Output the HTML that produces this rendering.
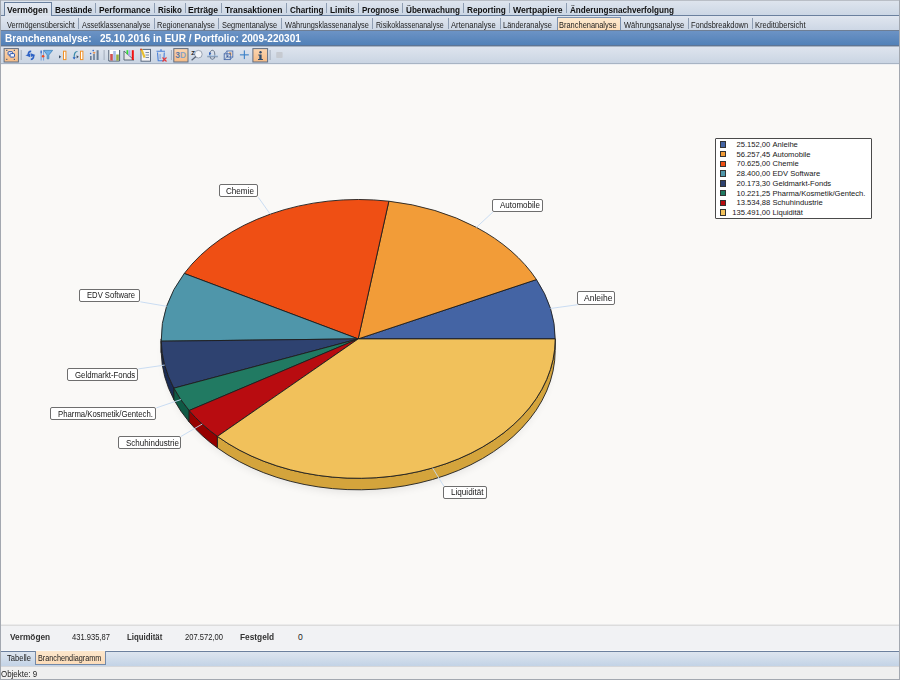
<!DOCTYPE html>
<html><head><meta charset="utf-8"><style>
html,body{margin:0;padding:0;}
body{width:900px;height:680px;position:relative;overflow:hidden;background:#faf9f7;font-family:"Liberation Sans", sans-serif;}
.t{position:absolute;white-space:nowrap;line-height:1;font-family:"Liberation Sans", sans-serif;}
</style></head><body>
<div style="position:absolute;left:0px;top:0px;width:900px;height:15px;background:linear-gradient(#dfe5ee,#ccd7e5);"></div><div style="position:absolute;left:0px;top:15px;width:900px;height:1px;background:#6a809e;"></div><div style="position:absolute;left:4px;top:2px;width:46px;height:13px;border:1px solid #6a809e;border-bottom:none;background:linear-gradient(#e4e9f1,#d9e0ea);"></div><div style="position:absolute;left:5px;top:15px;width:46px;height:1px;background:#d9e0ea;"></div><div class="t" style="transform:scaleX(0.9613);transform-origin:0 0;left:7.0px;top:6px;font-size:8.8px;font-weight:700;color:#111;">Vermögen</div><div class="t" style="transform:scaleX(0.9379);transform-origin:0 0;left:55.0px;top:6px;font-size:8.8px;font-weight:700;color:#111;">Bestände</div><div class="t" style="transform:scaleX(0.9554);transform-origin:0 0;left:99.0px;top:6px;font-size:8.8px;font-weight:700;color:#111;">Performance</div><div class="t" style="transform:scaleX(0.9051);transform-origin:0 0;left:157.5px;top:6px;font-size:8.8px;font-weight:700;color:#111;">Risiko</div><div class="t" style="transform:scaleX(0.9785);transform-origin:0 0;left:188.25px;top:6px;font-size:8.8px;font-weight:700;color:#111;">Erträge</div><div class="t" style="transform:scaleX(0.9622);transform-origin:0 0;left:225.0px;top:6px;font-size:8.8px;font-weight:700;color:#111;">Transaktionen</div><div class="t" style="transform:scaleX(0.9234);transform-origin:0 0;left:289.5px;top:6px;font-size:8.8px;font-weight:700;color:#111;">Charting</div><div class="t" style="transform:scaleX(0.9515);transform-origin:0 0;left:330.0px;top:6px;font-size:8.8px;font-weight:700;color:#111;">Limits</div><div class="t" style="transform:scaleX(0.9094);transform-origin:0 0;left:361.5px;top:6px;font-size:8.8px;font-weight:700;color:#111;">Prognose</div><div class="t" style="transform:scaleX(0.9266);transform-origin:0 0;left:405.75px;top:6px;font-size:8.8px;font-weight:700;color:#111;">Überwachung</div><div class="t" style="transform:scaleX(0.9363);transform-origin:0 0;left:466.5px;top:6px;font-size:8.8px;font-weight:700;color:#111;">Reporting</div><div class="t" style="transform:scaleX(0.9795);transform-origin:0 0;left:512.75px;top:6px;font-size:8.8px;font-weight:700;color:#111;">Wertpapiere</div><div class="t" style="transform:scaleX(0.9242);transform-origin:0 0;left:569.5px;top:6px;font-size:8.8px;font-weight:700;color:#111;">Änderungsnachverfolgung</div><div style="position:absolute;left:95.25px;top:3px;width:1px;height:10px;background:#8e9db2;"></div><div style="position:absolute;left:153.5px;top:3px;width:1px;height:10px;background:#8e9db2;"></div><div style="position:absolute;left:184.5px;top:3px;width:1px;height:10px;background:#8e9db2;"></div><div style="position:absolute;left:221.0px;top:3px;width:1px;height:10px;background:#8e9db2;"></div><div style="position:absolute;left:285.75px;top:3px;width:1px;height:10px;background:#8e9db2;"></div><div style="position:absolute;left:326.25px;top:3px;width:1px;height:10px;background:#8e9db2;"></div><div style="position:absolute;left:357.75px;top:3px;width:1px;height:10px;background:#8e9db2;"></div><div style="position:absolute;left:402.0px;top:3px;width:1px;height:10px;background:#8e9db2;"></div><div style="position:absolute;left:462.75px;top:3px;width:1px;height:10px;background:#8e9db2;"></div><div style="position:absolute;left:509.0px;top:3px;width:1px;height:10px;background:#8e9db2;"></div><div style="position:absolute;left:565.75px;top:3px;width:1px;height:10px;background:#8e9db2;"></div><div style="position:absolute;left:0px;top:16px;width:900px;height:14px;background:linear-gradient(#e0e6ef,#cdd7e5);"></div><div style="position:absolute;left:557px;top:17px;width:62px;height:13px;border:1px solid #7d92b0;border-bottom:none;background:linear-gradient(#fde9cf,#fcdcb8);"></div><div class="t" style="transform:scaleX(0.8667);transform-origin:0 0;left:7.0px;top:21px;font-size:8.6px;font-weight:400;color:#222;">Vermögensübersicht</div><div class="t" style="transform:scaleX(0.8522);transform-origin:0 0;left:82.0px;top:21px;font-size:8.6px;font-weight:400;color:#222;">Assetklassenanalyse</div><div class="t" style="transform:scaleX(0.8717);transform-origin:0 0;left:157.0px;top:21px;font-size:8.6px;font-weight:400;color:#222;">Regionenanalyse</div><div class="t" style="transform:scaleX(0.8613);transform-origin:0 0;left:222.0px;top:21px;font-size:8.6px;font-weight:400;color:#222;">Segmentanalyse</div><div class="t" style="transform:scaleX(0.8567);transform-origin:0 0;left:284.5px;top:21px;font-size:8.6px;font-weight:400;color:#222;">Währungsklassenanalyse</div><div class="t" style="transform:scaleX(0.8233);transform-origin:0 0;left:375.75px;top:21px;font-size:8.6px;font-weight:400;color:#222;">Risikoklassenanalyse</div><div class="t" style="transform:scaleX(0.8899);transform-origin:0 0;left:451.25px;top:21px;font-size:8.6px;font-weight:400;color:#222;">Artenanalyse</div><div class="t" style="transform:scaleX(0.8672);transform-origin:0 0;left:503.25px;top:21px;font-size:8.6px;font-weight:400;color:#222;">Länderanalyse</div><div class="t" style="transform:scaleX(0.8679);transform-origin:0 0;left:559.0px;top:21px;font-size:8.6px;font-weight:400;color:#222;">Branchenanalyse</div><div class="t" style="transform:scaleX(0.8743);transform-origin:0 0;left:624.0px;top:21px;font-size:8.6px;font-weight:400;color:#222;">Währungsanalyse</div><div class="t" style="transform:scaleX(0.8667);transform-origin:0 0;left:691.25px;top:21px;font-size:8.6px;font-weight:400;color:#222;">Fondsbreakdown</div><div class="t" style="transform:scaleX(0.8835);transform-origin:0 0;left:755.25px;top:21px;font-size:8.6px;font-weight:400;color:#222;">Kreditübersicht</div><div style="position:absolute;left:78.25px;top:18px;width:1px;height:10.5px;background:#8e9db2;"></div><div style="position:absolute;left:153.5px;top:18px;width:1px;height:10.5px;background:#8e9db2;"></div><div style="position:absolute;left:218.25px;top:18px;width:1px;height:10.5px;background:#8e9db2;"></div><div style="position:absolute;left:280.75px;top:18px;width:1px;height:10.5px;background:#8e9db2;"></div><div style="position:absolute;left:372.0px;top:18px;width:1px;height:10.5px;background:#8e9db2;"></div><div style="position:absolute;left:447.5px;top:18px;width:1px;height:10.5px;background:#8e9db2;"></div><div style="position:absolute;left:499.5px;top:18px;width:1px;height:10.5px;background:#8e9db2;"></div><div style="position:absolute;left:687.5px;top:18px;width:1px;height:10.5px;background:#8e9db2;"></div><div style="position:absolute;left:752.0px;top:18px;width:1px;height:10.5px;background:#8e9db2;"></div><div style="position:absolute;left:0px;top:30px;width:900px;height:1px;background:#6e7e94;"></div><div style="position:absolute;left:0px;top:31px;width:900px;height:14px;background:linear-gradient(#6c93c5,#5281b8);"></div><div style="position:absolute;left:0px;top:45px;width:900px;height:1px;background:#5e7595;"></div><div style="position:absolute;left:0px;top:46px;width:900px;height:1px;background:#a8b3c2;"></div><div class="t" style="transform:scaleX(1.0044);transform-origin:0 0;left:5.2px;top:34px;font-size:10px;font-weight:700;color:#fff;">Branchenanalyse:&nbsp;&nbsp; 25.10.2016 in EUR / Portfolio: 2009-220301</div><div style="position:absolute;left:0px;top:47px;width:900px;height:16px;background:linear-gradient(#dee4ee,#cad5e3);"></div><div style="position:absolute;left:0px;top:63px;width:900px;height:1px;background:#a8b4c4;"></div><div style="position:absolute;left:0px;top:64px;width:900px;height:1px;background:#eef0f3;"></div><svg width="900" height="66" style="position:absolute;left:0;top:0"><defs><linearGradient id="og" x1="0" y1="0" x2="0" y2="1"><stop offset="0" stop-color="#fbd5b0"/><stop offset="1" stop-color="#f4bb86"/></linearGradient></defs><rect x="4.1" y="48.6" width="14.299999999999999" height="13.4" fill="url(#og)" stroke="#5f6d82" stroke-width="1"/><rect x="173.8" y="48.6" width="14.199999999999989" height="13.4" fill="url(#og)" stroke="#5f6d82" stroke-width="1"/><rect x="252.9" y="48.6" width="14.700000000000017" height="13.4" fill="url(#og)" stroke="#5f6d82" stroke-width="1"/><rect x="20.7" y="50" width="1" height="10" fill="#a3adbb"/><rect x="103.6" y="50" width="1" height="10" fill="#a3adbb"/><rect x="170.9" y="50" width="1" height="10" fill="#a3adbb"/><rect x="269.6" y="50" width="1" height="10" fill="#a3adbb"/><rect x="6.2" y="49.8" width="1.2" height="1.2" fill="#4a5a78"/><rect x="13.8" y="49.8" width="1.2" height="1.2" fill="#4a5a78"/><rect x="6.2" y="58.8" width="1.2" height="1.2" fill="#4a5a78"/><rect x="13.8" y="58.8" width="1.2" height="1.2" fill="#4a5a78"/><rect x="8.1" y="51.7" width="4.4" height="3.3" rx="0.6" fill="#eef2fc" stroke="#2a56b0" stroke-width="1"/><rect x="10.1" y="53.6" width="4.4" height="3.5" rx="0.6" fill="#f4f7fd" stroke="#2a56b0" stroke-width="1"/><path d="M31.2,51.3 C29,51.2 28.2,52.6 28.4,55" stroke="#2e62c4" stroke-width="1.7" fill="none"/><path d="M25.4,55.2 L30.4,53.4 L30.2,57.2 Z" fill="#2e62c4"/><path d="M30.8,59.3 C33,59.2 33.8,57.6 33.6,55" stroke="#2e62c4" stroke-width="1.7" fill="none"/><path d="M35.4,55 L30.8,53.2 L31,56.9 Z" fill="#2e62c4"/><rect x="40.6" y="50.2" width="1.1" height="10.3" fill="#7aa4dc"/><rect x="43" y="50.2" width="1.1" height="10.3" fill="#7aa4dc"/><rect x="40.6" y="50.8" width="1.1" height="2.5" fill="#2e62c4"/><circle cx="43.1" cy="56.2" r="1.3" fill="#f04a20"/><path d="M43.8,50.4 L52.6,50.4 L48.8,55 L48.8,58.8 L47.2,58.8 L47.2,55 Z" fill="#6fb0e8" stroke="#3f82b8" stroke-width="0.8"/><path d="M59,55.2 L61.2,56.8 L59,58.4 Z" fill="#3a4a60"/><rect x="63.5" y="51.2" width="2.4" height="8.4" fill="#fff" stroke="#f0922a" stroke-width="1"/><path d="M77.5,51.5 C75,51.5 74,53.5 74.2,58.5" stroke="#3a8aa8" stroke-width="1.2" fill="none"/><path d="M72.6,57.2 L75.8,57.2 L74.2,59.4 Z" fill="#2e62c4"/><path d="M76.6,55.2 L78.8,56.8 L76.6,58.4 Z" fill="#3a4a60"/><rect x="80.5" y="51.2" width="2.4" height="8.4" fill="#fff" stroke="#f0922a" stroke-width="1"/><rect x="90" y="56" width="1.6" height="4" fill="#6a7d95"/><rect x="93.2" y="54" width="1.6" height="6" fill="#6a7d95"/><rect x="96.6" y="50.2" width="2" height="9.8" fill="#6a7d95"/><path d="M92.6,52.2 L95.6,52.2 L94.1,54 Z" fill="#f07a20"/><circle cx="90.6" cy="53.5" r="0.8" fill="#2e62c4"/><circle cx="93.2" cy="50.6" r="0.8" fill="#2e62c4"/><rect x="108.6" y="50" width="11" height="11" fill="#fff"/><path d="M108.8,50 L108.8,61 L119.6,61 L119.6,50" stroke="#4a5a70" stroke-width="1" fill="none"/><rect x="110.2" y="54" width="2.6" height="6.5" fill="#d05050"/><rect x="113.2" y="51" width="2.6" height="9.5" fill="#a8bce8"/><rect x="116.2" y="54.5" width="2.6" height="6" fill="#98b040"/><path d="M124,51 L134,60 L124,60 Z" fill="#e8e8e8" stroke="#5a6878" stroke-width="1"/><rect x="126.5" y="50.2" width="1.8" height="4" fill="#30e030"/><rect x="128.6" y="50.2" width="1.8" height="6" fill="#b0a8f0"/><rect x="131.8" y="50.2" width="2" height="9.8" fill="#f01010"/><rect x="141" y="49.4" width="9.5" height="11.8" fill="#f4f4f6" stroke="#5a6a80" stroke-width="1"/><rect x="145.5" y="52" width="3.5" height="1" fill="#7a8aa0"/><rect x="145.5" y="54.5" width="3.5" height="1" fill="#7a8aa0"/><rect x="145.5" y="57" width="3.5" height="1" fill="#7a8aa0"/><path d="M140.4,49.6 L142.4,49 L145.6,57 L143.6,58 Z" fill="#e8c030"/><circle cx="141" cy="49.4" r="0.9" fill="#e04020"/><path d="M156.5,51.2 L165,51.2 M160,50 L162,50" stroke="#4a80d8" stroke-width="1.1" fill="none"/><path d="M157.5,52.5 L158.2,60.8 L163.8,60.8 L164.3,52.5" stroke="#4a80d8" stroke-width="1.1" fill="none"/><rect x="159.6" y="54" width="1" height="5" fill="#7aa0e0"/><path d="M162.5,57.5 L166.5,61.5 M166.5,57.5 L162.5,61.5" stroke="#e83838" stroke-width="1.1"/><text x="175.2" y="58.3" font-family="Liberation Sans" font-size="8.8" font-weight="700" fill="#5a7aa6" textLength="10.9" lengthAdjust="spacingAndGlyphs">3<tspan fill="#8aa2c4">D</tspan></text><circle cx="198.4" cy="54.2" r="3.8" fill="#f2f4f8" stroke="#9aa4b4" stroke-width="1"/><path d="M196,56.5 L191.6,60.2" stroke="#5a6476" stroke-width="1.3"/><text x="191.2" y="55" font-family="Liberation Sans" font-size="6" font-weight="700" fill="#222">Z</text><ellipse cx="212.4" cy="54.8" rx="2.4" ry="4.5" fill="none" stroke="#5a6a80" stroke-width="0.9"/><rect x="207.2" y="55.4" width="10.7" height="1.3" fill="#a8c8ec"/><rect x="207.2" y="56.5" width="10.7" height="0.7" fill="#6a7a90"/><path d="M209,52 L211.3,53.6 L209,55.2 Z" fill="#2e62c4"/><rect x="227" y="51" width="5.8" height="6" fill="#eef2fa" stroke="#4a6aa8" stroke-width="0.9"/><path d="M228.6,52.4 L231.4,52.4 L231.4,56 Z" fill="#f08010"/><rect x="224.2" y="53.8" width="6.1" height="5.8" fill="none" stroke="#4a6aa8" stroke-width="0.9"/><path d="M224.2,53.8 L227,51 M230.3,59.6 L232.8,57 M224.6,59.2 L231,52.6" stroke="#5a7ab0" stroke-width="0.7"/><circle cx="227.6" cy="56.2" r="0.6" fill="#2a4a90"/><rect x="239.9" y="54.3" width="8.9" height="1.1" fill="#3a80c8"/><rect x="243.8" y="50.4" width="1.1" height="8.7" fill="#3a80c8"/><circle cx="260.5" cy="52.3" r="1.2" fill="#2f4a6a"/><path d="M258.3,54.4 L261.6,54.4 L261.6,58.9 L262.9,58.9 L262.9,59.9 L258,59.9 L258,58.9 L259.3,58.9 L259.3,55.4 L258.3,55.4 Z" fill="#2f4a6a"/><rect x="276.2" y="52" width="6.4" height="6" rx="0.8" fill="#c6cad1"/></svg><div style="position:absolute;left:0px;top:624px;width:900px;height:1px;background:#ebebeb;"></div><div style="position:absolute;left:0px;top:625px;width:900px;height:1px;background:#dcdcdc;"></div><div style="position:absolute;left:0px;top:626px;width:900px;height:25px;background:#f1f2f4;"></div><div class="t" style="transform:scaleX(0.9448);transform-origin:0 0;left:9.6px;top:633px;font-size:8.8px;font-weight:700;color:#333;">Vermögen</div><div class="t" style="transform:scaleX(0.8811);transform-origin:0 0;left:72.4px;top:633px;font-size:8.6px;font-weight:400;color:#222;">431.935,87</div><div class="t" style="transform:scaleX(0.8919);transform-origin:0 0;left:127.3px;top:633px;font-size:8.8px;font-weight:700;color:#333;">Liquidität</div><div class="t" style="transform:scaleX(0.8834);transform-origin:0 0;left:185.1px;top:633px;font-size:8.6px;font-weight:400;color:#222;">207.572,00</div><div class="t" style="transform:scaleX(0.9455);transform-origin:0 0;left:239.5px;top:633px;font-size:8.8px;font-weight:700;color:#333;">Festgeld</div><div class="t" style="left:297.9px;top:633px;font-size:8.6px;font-weight:400;color:#222;">0</div><div style="position:absolute;left:0px;top:650px;width:900px;height:1px;background:#f7f8f9;"></div><div style="position:absolute;left:0px;top:651px;width:900px;height:1px;background:#6c809e;"></div><div style="position:absolute;left:0px;top:652px;width:900px;height:14px;background:linear-gradient(#dde5ef,#c3d3e6);"></div><div style="position:absolute;left:35px;top:651px;width:68.8px;height:13px;border:1px solid #7389a8;border-top:none;background:linear-gradient(#fde7cc,#fcdcb9);"></div><div class="t" style="transform:scaleX(0.8812);transform-origin:0 0;left:7.0px;top:654px;font-size:8.6px;font-weight:400;color:#222;">Tabelle</div><div class="t" style="transform:scaleX(0.8453);transform-origin:0 0;left:38.3px;top:654px;font-size:8.6px;font-weight:400;color:#222;">Branchendiagramm</div><div style="position:absolute;left:0px;top:666px;width:900px;height:1px;background:#d6d7da;"></div><div style="position:absolute;left:0px;top:667px;width:900px;height:12px;background:#efefef;"></div><div class="t" style="transform:scaleX(0.9216);transform-origin:0 0;left:1.3px;top:670px;font-size:8.6px;font-weight:400;color:#222;">Objekte: 9</div><div style="position:absolute;left:0px;top:0px;width:900px;height:1px;background:#b9bec6;"></div><div style="position:absolute;left:0px;top:0px;width:1px;height:680px;background:#a3a8b0;"></div><div style="position:absolute;left:899px;top:0px;width:1px;height:680px;background:#a3a8b0;"></div><div style="position:absolute;left:0px;top:679px;width:900px;height:1px;background:#a3a8b0;"></div><svg width="900" height="680" style="position:absolute;left:0;top:0"><defs><filter id="sh" x="-20%" y="-20%" width="140%" height="140%"><feGaussianBlur stdDeviation="5"/></filter></defs><ellipse cx="358.2" cy="354.4" rx="193.0" ry="137.4" fill="#000" opacity="0.10" filter="url(#sh)"/><path d="M161.20,338.90 A197.0,139.4 0 0 0 161.23,341.21 L161.23,352.71 A197.0,139.4 0 0 1 161.20,350.40 Z" fill="#356e80" stroke="#1e1e1e" stroke-width="0.9" stroke-linejoin="round"/><path d="M161.23,341.21 A197.0,139.4 0 0 0 173.92,388.17 L173.92,399.67 A197.0,139.4 0 0 1 161.23,352.71 Z" fill="#1a2c55" stroke="#1e1e1e" stroke-width="0.9" stroke-linejoin="round"/><path d="M173.92,388.17 A197.0,139.4 0 0 0 189.16,410.49 L189.16,421.99 A197.0,139.4 0 0 1 173.92,399.67 Z" fill="#0f5a45" stroke="#1e1e1e" stroke-width="0.9" stroke-linejoin="round"/><path d="M189.16,410.49 A197.0,139.4 0 0 0 217.45,436.43 L217.45,447.93 A197.0,139.4 0 0 1 189.16,421.99 Z" fill="#960000" stroke="#1e1e1e" stroke-width="0.9" stroke-linejoin="round"/><path d="M217.45,436.43 A197.0,139.4 0 0 0 555.20,338.90 L555.20,350.40 A197.0,139.4 0 0 1 217.45,447.93 Z" fill="#d4a43c" stroke="#1e1e1e" stroke-width="0.9" stroke-linejoin="round"/><path d="M358.2,338.9 L555.20,338.90 A197.0,139.4 0 0 0 536.45,279.55 Z" fill="#4464a4" stroke="#1e1e1e" stroke-width="0.9" stroke-linejoin="round"/><path d="M358.2,338.9 L536.45,279.55 A197.0,139.4 0 0 0 388.85,201.20 Z" fill="#f29c38" stroke="#1e1e1e" stroke-width="0.9" stroke-linejoin="round"/><path d="M358.2,338.9 L388.85,201.20 A197.0,139.4 0 0 0 184.26,273.46 Z" fill="#ef4f14" stroke="#1e1e1e" stroke-width="0.9" stroke-linejoin="round"/><path d="M358.2,338.9 L184.26,273.46 A197.0,139.4 0 0 0 161.23,341.21 Z" fill="#4f96aa" stroke="#1e1e1e" stroke-width="0.9" stroke-linejoin="round"/><path d="M358.2,338.9 L161.23,341.21 A197.0,139.4 0 0 0 173.92,388.17 Z" fill="#2e4270" stroke="#1e1e1e" stroke-width="0.9" stroke-linejoin="round"/><path d="M358.2,338.9 L173.92,388.17 A197.0,139.4 0 0 0 189.16,410.49 Z" fill="#217a62" stroke="#1e1e1e" stroke-width="0.9" stroke-linejoin="round"/><path d="M358.2,338.9 L189.16,410.49 A197.0,139.4 0 0 0 217.45,436.43 Z" fill="#b80c10" stroke="#1e1e1e" stroke-width="0.9" stroke-linejoin="round"/><path d="M358.2,338.9 L217.45,436.43 A197.0,139.4 0 0 0 555.20,338.90 Z" fill="#f1c15b" stroke="#1e1e1e" stroke-width="0.9" stroke-linejoin="round"/><line x1="550.46" y1="308.49" x2="577.8" y2="304.7" stroke="#c4d9f2" stroke-width="0.9"/><line x1="476.41" y1="227.39" x2="492.9" y2="212.0" stroke="#c4d9f2" stroke-width="0.9"/><line x1="270.22" y1="214.17" x2="258.3" y2="197.3" stroke="#c4d9f2" stroke-width="0.9"/><line x1="166.66" y1="306.30" x2="140.3" y2="301.8" stroke="#c4d9f2" stroke-width="0.9"/><line x1="164.71" y1="365.08" x2="138.3" y2="368.9" stroke="#c4d9f2" stroke-width="0.9"/><line x1="180.84" y1="399.57" x2="156.3" y2="407.9" stroke="#c4d9f2" stroke-width="0.9"/><line x1="202.22" y1="424.05" x2="180.9" y2="436.5" stroke="#c4d9f2" stroke-width="0.9"/><line x1="432.63" y1="467.97" x2="443.8" y2="486.1" stroke="#c4d9f2" stroke-width="0.9"/></svg><div style="position:absolute;left:577.3px;top:291.4px;width:36.2px;height:11.2px;border:1.3px solid #6e6e6e;border-radius:2px;background:#fff;"></div><div class="t" style="transform:scaleX(1.0160);transform-origin:0 0;left:583.7px;top:294.0px;font-size:8.4px;font-weight:400;color:#161616;">Anleihe</div><div style="position:absolute;left:492.4px;top:198.6px;width:49.1px;height:11.3px;border:1.3px solid #6e6e6e;border-radius:2px;background:#fff;"></div><div class="t" style="transform:scaleX(0.9545);transform-origin:0 0;left:499.8px;top:201.2px;font-size:8.4px;font-weight:400;color:#161616;">Automobile</div><div style="position:absolute;left:219.1px;top:184.3px;width:37.1px;height:10.9px;border:1.3px solid #6e6e6e;border-radius:2px;background:#fff;"></div><div class="t" style="transform:scaleX(0.9668);transform-origin:0 0;left:225.7px;top:186.9px;font-size:8.4px;font-weight:400;color:#161616;">Chemie</div><div style="position:absolute;left:79.2px;top:288.7px;width:59.0px;height:11.0px;border:1.3px solid #6e6e6e;border-radius:2px;background:#fff;"></div><div class="t" style="transform:scaleX(0.9143);transform-origin:0 0;left:87.1px;top:291.3px;font-size:8.4px;font-weight:400;color:#161616;">EDV Software</div><div style="position:absolute;left:66.7px;top:368.4px;width:69.5px;height:10.7px;border:1.3px solid #6e6e6e;border-radius:2px;background:#fff;"></div><div class="t" style="transform:scaleX(0.9304);transform-origin:0 0;left:74.5px;top:371.0px;font-size:8.4px;font-weight:400;color:#161616;">Geldmarkt-Fonds</div><div style="position:absolute;left:50.3px;top:407.4px;width:103.9px;height:11.0px;border:1.3px solid #6e6e6e;border-radius:2px;background:#fff;"></div><div class="t" style="transform:scaleX(0.9267);transform-origin:0 0;left:58.2px;top:410.0px;font-size:8.4px;font-weight:400;color:#161616;">Pharma/Kosmetik/Gentech.</div><div style="position:absolute;left:118.3px;top:436px;width:60.5px;height:10.8px;border:1.3px solid #6e6e6e;border-radius:2px;background:#fff;"></div><div class="t" style="transform:scaleX(0.9548);transform-origin:0 0;left:125.5px;top:438.6px;font-size:8.4px;font-weight:400;color:#161616;">Schuhindustrie</div><div style="position:absolute;left:443.3px;top:485.6px;width:41.6px;height:11.2px;border:1.3px solid #6e6e6e;border-radius:2px;background:#fff;"></div><div class="t" style="transform:scaleX(0.9692);transform-origin:0 0;left:450.6px;top:488.2px;font-size:8.4px;font-weight:400;color:#161616;">Liquidität</div><div style="position:absolute;left:715px;top:138px;width:155.2px;height:79.3px;border:1.2px solid #4a4a4a;border-radius:1px;background:#fff;"></div><div style="position:absolute;left:720px;top:141.3px;width:4.4px;height:4.4px;border:0.8px solid #333;background:#4464a4;"></div><div class="t" style="left:700px;top:141.00px;width:70.3px;text-align:right;font-size:7.6px;color:#161616;">25.152,00</div><div class="t" style="left:772.5px;top:141.0px;font-size:7.6px;font-weight:400;color:#161616;">Anleihe</div><div style="position:absolute;left:720px;top:151.01px;width:4.4px;height:4.4px;border:0.8px solid #333;background:#f29c38;"></div><div class="t" style="left:700px;top:150.71px;width:70.3px;text-align:right;font-size:7.6px;color:#161616;">56.257,45</div><div class="t" style="left:772.5px;top:150.71px;font-size:7.6px;font-weight:400;color:#161616;">Automobile</div><div style="position:absolute;left:720px;top:160.72px;width:4.4px;height:4.4px;border:0.8px solid #333;background:#ef4f14;"></div><div class="t" style="left:700px;top:160.42px;width:70.3px;text-align:right;font-size:7.6px;color:#161616;">70.625,00</div><div class="t" style="left:772.5px;top:160.42px;font-size:7.6px;font-weight:400;color:#161616;">Chemie</div><div style="position:absolute;left:720px;top:170.43px;width:4.4px;height:4.4px;border:0.8px solid #333;background:#4f96aa;"></div><div class="t" style="left:700px;top:170.13px;width:70.3px;text-align:right;font-size:7.6px;color:#161616;">28.400,00</div><div class="t" style="left:772.5px;top:170.13px;font-size:7.6px;font-weight:400;color:#161616;">EDV Software</div><div style="position:absolute;left:720px;top:180.14px;width:4.4px;height:4.4px;border:0.8px solid #333;background:#2e4270;"></div><div class="t" style="left:700px;top:179.84px;width:70.3px;text-align:right;font-size:7.6px;color:#161616;">20.173,30</div><div class="t" style="left:772.5px;top:179.84px;font-size:7.6px;font-weight:400;color:#161616;">Geldmarkt-Fonds</div><div style="position:absolute;left:720px;top:189.85px;width:4.4px;height:4.4px;border:0.8px solid #333;background:#217a62;"></div><div class="t" style="left:700px;top:189.55px;width:70.3px;text-align:right;font-size:7.6px;color:#161616;">10.221,25</div><div class="t" style="left:772.5px;top:189.55px;font-size:7.6px;font-weight:400;color:#161616;">Pharma/Kosmetik/Gentech.</div><div style="position:absolute;left:720px;top:199.56px;width:4.4px;height:4.4px;border:0.8px solid #333;background:#b80c10;"></div><div class="t" style="left:700px;top:199.26px;width:70.3px;text-align:right;font-size:7.6px;color:#161616;">13.534,88</div><div class="t" style="left:772.5px;top:199.26px;font-size:7.6px;font-weight:400;color:#161616;">Schuhindustrie</div><div style="position:absolute;left:720px;top:209.27px;width:4.4px;height:4.4px;border:0.8px solid #333;background:#f1c15b;"></div><div class="t" style="left:700px;top:208.97px;width:70.3px;text-align:right;font-size:7.6px;color:#161616;">135.491,00</div><div class="t" style="left:772.5px;top:208.97px;font-size:7.6px;font-weight:400;color:#161616;">Liquidität</div>
</body></html>
